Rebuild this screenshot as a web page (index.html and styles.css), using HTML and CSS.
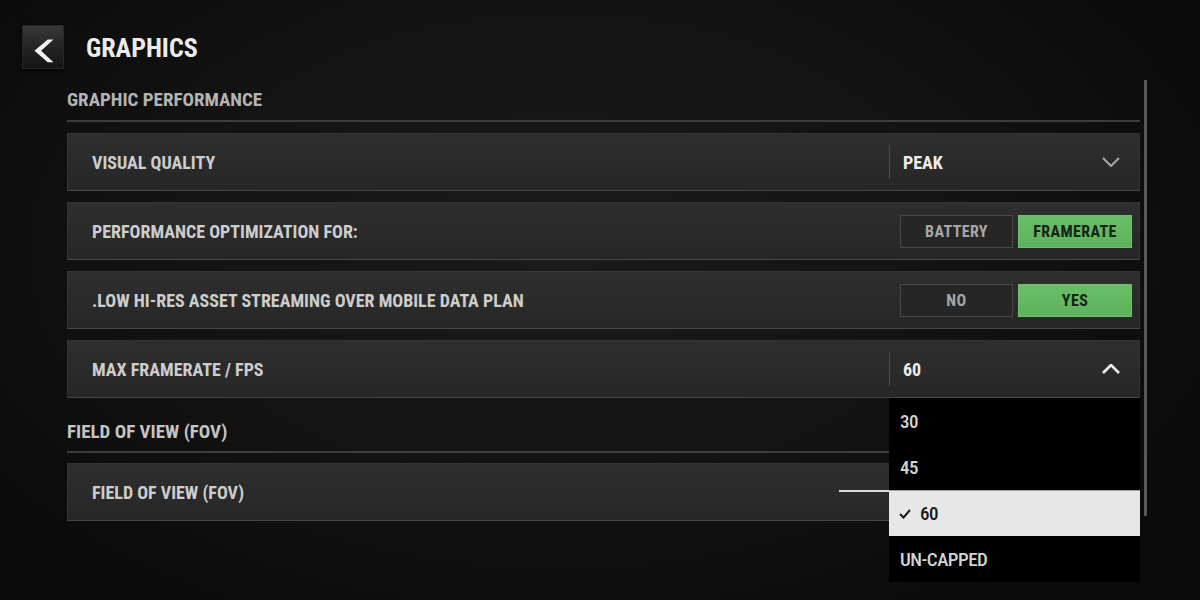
FILE: index.html
```html
<!DOCTYPE html>
<html lang="en">
<head>
<meta charset="utf-8">
<title>Graphics</title>
<link rel="stylesheet" href="styles.css">
</head>
<body>
<div class="screen">
  <header class="topbar">
    <button class="back" aria-label="Back">
      <svg width="42" height="44" viewBox="0 0 42 44"><polygon points="26,13 32,13 19,25 32,37 26,37 12,25" fill="#f2f2f2"/></svg>
    </button>
    <h1 class="title">GRAPHICS</h1>
  </header>

  <div class="panel">
    <div class="settings">
      <section class="group">
        <h2 class="group-title">GRAPHIC PERFORMANCE</h2>
        <div class="rows">
          <div class="row">
            <span class="label">VISUAL QUALITY</span>
            <div class="select">
              <span class="select-value">PEAK</span>
              <svg class="chev" width="18" height="10" viewBox="0 0 18 10"><polyline points="1,1 9,9 17,1" fill="none" stroke="#a8a8a8" stroke-width="2"/></svg>
            </div>
          </div>
          <div class="row">
            <span class="label">PERFORMANCE OPTIMIZATION FOR:</span>
            <div class="toggle">
              <span class="opt">BATTERY</span>
              <span class="opt opt-on">FRAMERATE</span>
            </div>
          </div>
          <div class="row">
            <span class="label">.LOW HI-RES ASSET STREAMING OVER MOBILE DATA PLAN</span>
            <div class="toggle">
              <span class="opt">NO</span>
              <span class="opt opt-on">YES</span>
            </div>
          </div>
          <div class="row">
            <span class="label">MAX FRAMERATE / FPS</span>
            <div class="select">
              <span class="select-value">60</span>
              <svg class="chev" width="18" height="10" viewBox="0 0 18 10"><polyline points="1,9 9,1 17,9" fill="none" stroke="#f0f0f0" stroke-width="2.6"/></svg>
              <ul class="menu">
                <li class="menu-item">30</li>
                <li class="menu-item">45</li>
                <li class="menu-item menu-item-on"><svg class="check" width="12" height="10" viewBox="0 0 12 10"><polyline points="1,5 4.5,8.5 11,1" fill="none" stroke="#1a1a1a" stroke-width="2"/></svg>60</li>
                <li class="menu-item">UN-CAPPED</li>
              </ul>
            </div>
          </div>
        </div>
      </section>

      <section class="group group-fov">
        <h2 class="group-title">FIELD OF VIEW (FOV)</h2>
        <div class="rows">
          <div class="row">
            <span class="label">FIELD OF VIEW (FOV)</span>
            <div class="slider"><div class="slider-fill"></div></div>
          </div>
        </div>
      </section>
    </div>
    <div class="scrollbar"></div>
  </div>
</div>
</body>
</html>
```

FILE: styles.css
```css
* { box-sizing: border-box; }

html, body {
  margin: 0;
  padding: 0;
}

body {
  width: 1200px;
  height: 600px;
  overflow: hidden;
  background: #0b0b0b;
  font-family: "Roboto Condensed", "Open Sans", sans-serif;
  font-stretch: 75%;
  font-weight: 700;
  color: #d0d0d0;
}

.screen {
  width: 1200px;
  height: 600px;
  background:
    radial-gradient(ellipse 700px 420px at 560px 250px, #1b1b1b 0%, #131313 55%, #0b0b0b 100%);
}

.topbar {
  display: flex;
  align-items: center;
  padding: 25px 0 0 22px;
  height: 69px;
}

.back {
  width: 42px;
  height: 44px;
  padding: 0;
  border: 1px solid #262626;
  background: linear-gradient(180deg, #383838 0%, #262626 45%, #141414 100%);
  display: flex;
  box-shadow: 0 2px 4px rgba(0,0,0,0.6);
}

.title {
  margin: 2px 0 0 22px;
  font-size: 26px;
  line-height: 30px;
  letter-spacing: 0;
  color: #ececec;
  font-weight: 700;
}

.panel {
  display: flex;
  margin-top: 11px;
  padding-left: 67px;
}

.settings {
  width: 1073px;
  padding-top: 9px;
}

.scrollbar {
  width: 3px;
  height: 436px;
  margin-left: 4px;
  background: #585858;
}

.group-title {
  margin: 0 0 11px 0;
  padding-bottom: 9px;
  border-bottom: 2px solid #3d3d3d;
  font-size: 19px;
  line-height: 22px;
  font-weight: 700;
  color: #b4b4b4;
}

.group-fov { margin-top: 23px; }
.group-fov .group-title { padding-bottom: 8px; margin-bottom: 10px; color: #c4c4c4; }

.rows {
  display: flex;
  flex-direction: column;
  gap: 11px;
}

.row {
  display: flex;
  align-items: center;
  height: 58px;
  padding-left: 24px;
  border: 1px solid #343434;
  border-bottom-color: #474747;
  background: linear-gradient(180deg, #2e2e2e 0%, #2a2a2a 60%, #262626 100%);
}

.label {
  flex: 1;
  font-size: 18px;
  color: #cdcdcd;
  white-space: nowrap;
}

.select {
  position: relative;
  align-self: stretch;
  width: 250px;
  display: flex;
  align-items: center;
  padding-left: 14px;
}

.select::before {
  content: "";
  position: absolute;
  left: 0;
  top: 11px;
  bottom: 11px;
  width: 1px;
  background: #4e4e4e;
}

.select-value {
  flex: 1;
  font-size: 18px;
  color: #ededed;
}

.chev { margin-right: 19px; }

.menu {
  position: absolute;
  z-index: 10;
  top: 57px;
  left: 0;
  width: 251px;
  margin: 0;
  padding: 0;
  list-style: none;
  background: #000;
}

.menu-item {
  height: 46px;
  display: flex;
  align-items: center;
  padding-left: 11px;
  font-size: 19px;
  letter-spacing: -0.5px;
  font-weight: 500;
  color: #d4d4d4;
}

.menu-item-on {
  background: #e7e7e7;
  border-top: 1px solid #a0a0a0;
  color: #1a1a1a;
  padding-left: 10px;
}

.check { margin-right: 9px; }

.toggle {
  display: flex;
  gap: 5px;
  margin-right: 7px;
}

.opt {
  width: 113px;
  height: 33px;
  display: flex;
  align-items: center;
  justify-content: center;
  font-size: 16px;
  letter-spacing: 0.4px;
  color: #a6a6a6;
  background: #262626;
  border: 1px solid #484848;
}

.opt-on {
  width: 114px;
  background: linear-gradient(180deg, #69bd67 0%, #5db35b 100%);
  border-color: #6fc06c;
  color: #172417;
}

.slider {
  width: 280px;
  height: 2px;
  margin-right: 20px;
  margin-top: -2px;
  background: #555;
}

.slider-fill {
  width: 120px;
  height: 2px;
  background: #dcdcdc;
}
```
